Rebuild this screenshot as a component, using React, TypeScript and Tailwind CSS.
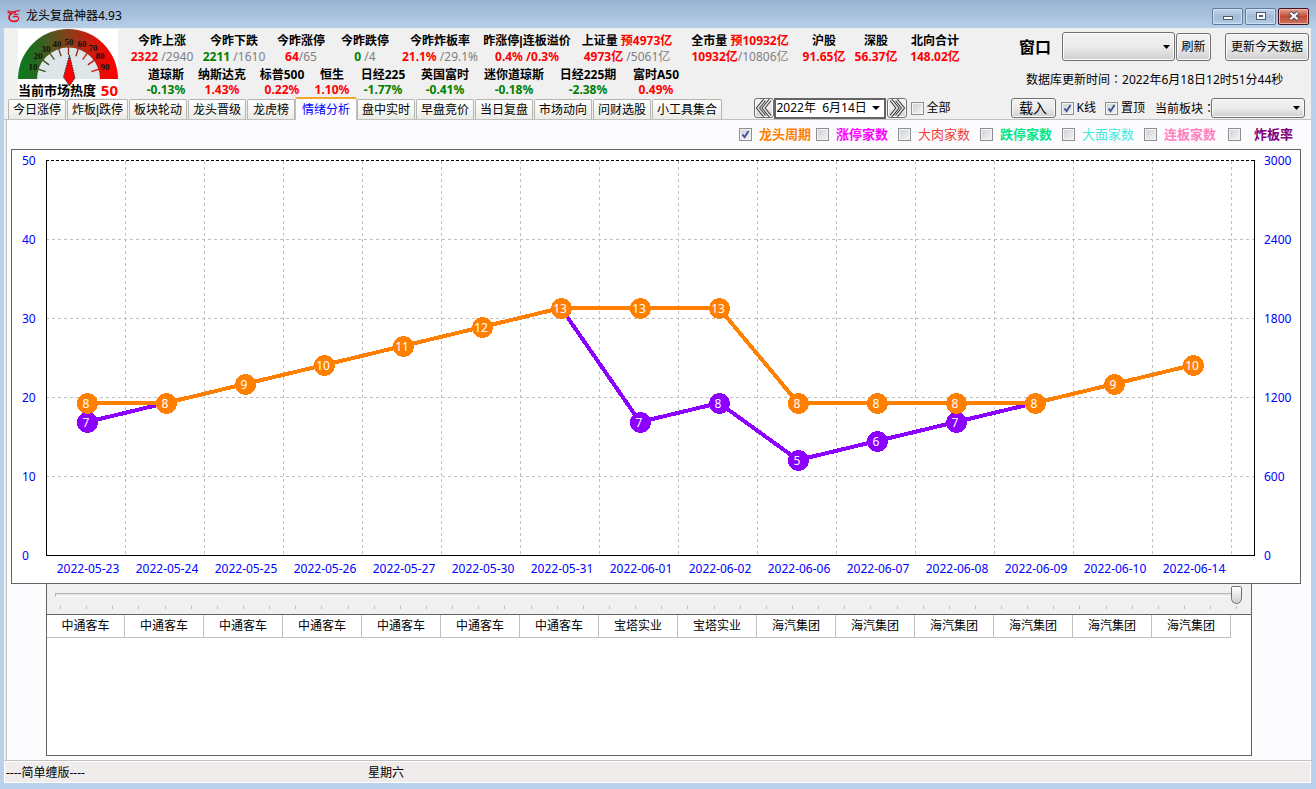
import React, { useState } from "react";

type Tone = "red" | "green" | "gray";
type Part = [string, Tone];

const toneClass: Record<Tone, string> = {
  red: "font-bold text-[#ff0000]",
  green: "font-bold text-[#008000]",
  gray: "font-normal text-[#808080]",
};

const market: { w: string; label: string; extra?: string; parts: Part[] }[] = [
  { w: "w-[72px]", label: "今昨上涨", parts: [["2322", "red"], [" /2940", "gray"]] },
  { w: "w-[72px]", label: "今昨下跌", parts: [["2211", "green"], [" /1610", "gray"]] },
  { w: "w-[62px]", label: "今昨涨停", parts: [["64", "red"], ["/65", "gray"]] },
  { w: "w-[66px]", label: "今昨跌停", parts: [["0", "green"], [" /4", "gray"]] },
  { w: "w-[84px]", label: "今昨炸板率", parts: [["21.1%", "red"], [" /29.1%", "gray"]] },
  { w: "w-[90px]", label: "昨涨停|连板溢价", parts: [["0.4% /0.3%", "red"]] },
  { w: "w-[110px]", label: "上证量", extra: "预4973亿", parts: [["4973亿", "red"], [" /5061亿", "gray"]] },
  { w: "w-[116px]", label: "全市量", extra: "预10932亿", parts: [["10932亿", "red"], ["/10806亿", "gray"]] },
  { w: "w-[52px]", label: "沪股", parts: [["91.65亿", "red"]] },
  { w: "w-[52px]", label: "深股", parts: [["56.37亿", "red"]] },
  { w: "w-[66px]", label: "北向合计", parts: [["148.02亿", "red"]] },
];

const indices: { w: string; label: string; value: string }[] = [
  { w: "w-[56px]", label: "道琼斯", value: "-0.13%" },
  { w: "w-[56px]", label: "纳斯达克", value: "1.43%" },
  { w: "w-[64px]", label: "标普500", value: "0.22%" },
  { w: "w-[36px]", label: "恒生", value: "1.10%" },
  { w: "w-[66px]", label: "日经225", value: "-1.77%" },
  { w: "w-[58px]", label: "英国富时", value: "-0.41%" },
  { w: "w-[80px]", label: "迷你道琼斯", value: "-0.18%" },
  { w: "w-[68px]", label: "日经225期", value: "-2.38%" },
  { w: "w-[68px]", label: "富时A50", value: "0.49%" },
];

const tabs: { label: string; w: string }[] = [
  { label: "今日涨停", w: "w-[58px]" },
  { label: "炸板|跌停", w: "w-[61px]" },
  { label: "板块轮动", w: "w-[58px]" },
  { label: "龙头晋级", w: "w-[58px]" },
  { label: "龙虎榜", w: "w-[48px]" },
  { label: "情绪分析", w: "w-[58px]" },
  { label: "盘中实时", w: "w-[58px]" },
  { label: "早盘竞价", w: "w-[58px]" },
  { label: "当日复盘", w: "w-[58px]" },
  { label: "市场动向", w: "w-[58px]" },
  { label: "问财选股", w: "w-[58px]" },
  { label: "小工具集合", w: "w-[70px]" },
];

const dates = ["2022-05-23", "2022-05-24", "2022-05-25", "2022-05-26", "2022-05-27", "2022-05-30", "2022-05-31", "2022-06-01", "2022-06-02", "2022-06-06", "2022-06-07", "2022-06-08", "2022-06-09", "2022-06-10", "2022-06-14"];
const leader = [8, 8, 9, 10, 11, 12, 13, 13, 13, 8, 8, 8, 8, 9, 10];
const follower = [7, 8, 9, 10, 11, 12, 13, 7, 8, 5, 6, 7, 8, 9, 10];
const stocks = ["中通客车", "中通客车", "中通客车", "中通客车", "中通客车", "中通客车", "中通客车", "宝塔实业", "宝塔实业", "海汽集团", "海汽集团", "海汽集团", "海汽集团", "海汽集团", "海汽集团"];

const seriesToggles = [
  { label: "龙头周期", color: "text-[#ff8000]", weight: "font-bold", space: "mr-[5px]", gap: "gap-[7px]", on: true },
  { label: "涨停家数", color: "text-[#ff00ff]", weight: "font-bold", space: "mr-[10px]", gap: "gap-[7px]", on: false },
  { label: "大肉家数", color: "text-[#f03c3c]", weight: "font-normal", space: "mr-[10px]", gap: "gap-[7px]", on: false },
  { label: "跌停家数", color: "text-[#00e68a]", weight: "font-bold", space: "mr-[10px]", gap: "gap-[7px]", on: false },
  { label: "大面家数", color: "text-[#40e8e0]", weight: "font-normal", space: "mr-[10px]", gap: "gap-[7px]", on: false },
  { label: "连板家数", color: "text-[#ff80c0]", weight: "font-bold", space: "mr-3", gap: "gap-[7px]", on: false },
  { label: "炸板率", color: "text-[#800080]", weight: "font-bold", space: "", gap: "gap-[13px]", on: false },
];

const buttonFace =
  "border border-[#707070] rounded-[3px] bg-linear-to-b from-[#f2f2f2] from-0% via-[#ebebeb] via-50% to-[#cfcfcf] shadow-[inset_0_0_0_1px_#fbfbfb]";

function Piped({ text }: { text: string }) {
  const [left, right] = text.split("|");
  if (right === undefined) return <>{text}</>;
  return (
    <>
      {left}
      <span className="font-['Liberation_Sans',sans-serif]">|</span>
      {right}
    </>
  );
}

function Check({ label, on, text = "", gap = "gap-[3px]" }: { label: string; on: boolean; text?: string; gap?: string }) {
  return (
    <label className={`flex items-center whitespace-nowrap ${gap}`}>
      <span className="grid size-[13px] shrink-0">
        <input
          type="checkbox"
          defaultChecked={on}
          className="peer col-start-1 row-start-1 size-[13px] appearance-none border border-[#8e8f8f] bg-linear-to-br from-[#cbcfd5] to-[#f6f6f6] shadow-[inset_0_0_0_1px_#f4f4f4]"
        />
        <svg viewBox="0 0 13 13" className="pointer-events-none invisible col-start-1 row-start-1 size-[13px] peer-checked:visible">
          <path d="M3.5 6.5 L5.6 9.2 L9.5 3" fill="none" stroke="#3b5495" strokeWidth="1.9" />
        </svg>
      </span>
      <span className={text}>{label}</span>
    </label>
  );
}

function DropDown({ label, size }: { label: string; size: string }) {
  return (
    <span className={`grid items-center ${size}`}>
      <select aria-label={label} className={`col-start-1 row-start-1 size-full appearance-none ${buttonFace}`} />
      <svg viewBox="0 0 8 4" className="pointer-events-none col-start-1 row-start-1 mr-1 h-1 w-2 justify-self-end">
        <path d="M0 0H7L3.5 4Z" fill="#000" />
      </svg>
    </span>
  );
}

function Chevrons({ d }: { d: string }) {
  return (
    <svg viewBox="0 0 18 18" className="size-[18px]" fill="none">
      <path d={d} stroke="#2a2a2a" strokeWidth="3.4" />
      <path d={d} stroke="#e4e4e4" strokeWidth="1.6" />
    </svg>
  );
}

function TitleBar() {
  const face =
    "flex h-[17px] w-[31px] items-center justify-center rounded-[2px] border border-[#5f7a9b] bg-linear-to-b from-[#c3d6ea] from-0% via-[#a3bcd8] via-50% to-[#b4cce6] shadow-[inset_0_0_0_1px_#d3e2f2]";
  return (
    <header className="flex h-7 items-center bg-linear-to-b from-[#98b3d1] to-[#b7cfe9] pt-1 pr-[7px] pl-[7px]">
      <svg viewBox="0 0 14 14" className="h-[14px] w-[14px]" fill="none" stroke="#dc1428">
        <path d="M0.5 1.5 L3.5 3 L8 2.4 L12.8 1.4 M0.5 3.4 L4 4.4 L9 3.6" strokeWidth="1.1" />
        <path d="M5 4.4 C2.2 5.4 1.4 8 2.6 10.4 C4 12.8 8.4 12.9 11 11.2" strokeWidth="1.7" />
        <path d="M11 11.2 C12.4 9.4 11.6 7.6 9.4 7.4 L5.8 7.6 M7 5.6 L11.5 5.2" strokeWidth="1.1" />
      </svg>
      <h1 className="ml-[5px] text-xs font-normal">龙头复盘神器4.93</h1>
      <div className="ml-auto flex gap-[2px]">
        <button aria-label="最小化" className={face}>
          <svg viewBox="0 0 12 10" className="h-[10px] w-3">
            <rect x="1.5" y="5.5" width="9" height="3" fill="#fff" stroke="#4b5a6e" />
          </svg>
        </button>
        <button aria-label="最大化" className={face}>
          <svg viewBox="0 0 12 10" className="h-[10px] w-3">
            <rect x="1.5" y="1.5" width="9" height="7" fill="#fff" stroke="#4b5a6e" />
            <rect x="4.5" y="4.5" width="3" height="1" fill="#a9c0da" stroke="#4b5a6e" />
          </svg>
        </button>
        <button
          aria-label="关闭"
          className="flex h-[17px] w-[31px] items-center justify-center rounded-[2px] border border-[#471321] bg-linear-to-b from-[#e3a497] from-0% via-[#c04a35] via-50% to-[#d0745c] shadow-[inset_0_0_0_1px_#eab5aa]"
        >
          <svg viewBox="0 0 12 10" className="h-[10px] w-3">
            <path d="M2 1.5 L10 8.5 M10 1.5 L2 8.5" stroke="#4b4a55" strokeWidth="4.2" />
            <path d="M2.4 1.8 L9.6 8.2 M9.6 1.8 L2.4 8.2" stroke="#fff" strokeWidth="2.2" />
          </svg>
        </button>
      </div>
    </header>
  );
}

function Gauge() {
  const marks: [string, number, number][] = [
    ["10", 15, 41], ["20", 20, 30], ["30", 28, 23], ["40", 39, 18], ["50", 51, 16], ["60", 64, 18], ["70", 75, 22], ["80", 82, 30], ["90", 87, 41],
  ];
  const shades = ["#3c5c18", "#4c5818", "#5c4c18", "#704418", "#883818", "#a03018", "#b82410", "#cc1810", "#e01008"];
  return (
    <div className="mt-px w-[100px] shrink-0 bg-white">
      <svg viewBox="0 0 100 53" className="block h-[53px] w-full overflow-visible">
        <defs>
          <linearGradient id="heat" x1="0" x2="1" y1="0" y2="0">
            <stop offset="0" stopColor="#087c1c" />
            <stop offset="0.2" stopColor="#2c6620" />
            <stop offset="0.5" stopColor="#85401c" />
            <stop offset="0.78" stopColor="#d81408" />
            <stop offset="1" stopColor="#ff0000" />
          </linearGradient>
        </defs>
        <path d="M0 50 A50 50 0 0 1 100 50 Z" fill="url(#heat)" />
        <path d="M19 50 A31.5 31.5 0 0 1 82 50 Z" fill="#dfe6ea" />
        {marks.map(([t], i) => {
          const a = Math.PI * (1 - (i + 1) / 10);
          const c = Math.cos(a);
          const s = Math.sin(a);
          return <line key={t} x1={50.5 + c * 32} y1={50 - s * 32} x2={50.5 + c * 24} y2={50 - s * 24} stroke={shades[i]} strokeWidth="1.4" />;
        })}
        {marks.map(([t, x, y]) => (
          <text key={t} x={x} y={y} textAnchor="middle" fill="#111" className="font-['Liberation_Serif',serif] text-[9px] font-bold">
            {t}
          </text>
        ))}
        <path d="M51.5 26 L57 49 L51.5 57 L45.5 48 Z" fill="#ff0000" stroke="#203038" strokeWidth="1" strokeDasharray="1.5 1" />
      </svg>
      <p className="flex h-4 items-center justify-between text-[13px] leading-4 font-bold whitespace-nowrap">
        <span>当前市场热度</span>
        <span className="text-[15px] text-[#ff0000]">50</span>
      </p>
    </div>
  );
}

function Stats() {
  return (
    <div className="pt-[5px] text-center text-xs leading-4 whitespace-pre">
      <dl className="flex pl-2">
        {market.map((m) => (
          <div key={m.label} className={`flex shrink-0 flex-col items-center ${m.w}`}>
            <dt className="font-bold">
              <Piped text={m.label} />
              {m.extra && <span className="text-[#ff0000]"> {m.extra}</span>}
            </dt>
            <dd>
              {m.parts.map(([t, tone]) => (
                <span key={t} className={toneClass[tone]}>{t}</span>
              ))}
            </dd>
          </div>
        ))}
      </dl>
      <dl className="mt-[2px] flex pl-5 leading-[15px]">
        {indices.map((m) => (
          <div key={m.label} className={`flex shrink-0 flex-col items-center ${m.w}`}>
            <dt className="font-bold">{m.label}</dt>
            <dd className={m.value.startsWith("-") ? toneClass.green : toneClass.red}>{m.value}</dd>
          </div>
        ))}
      </dl>
    </div>
  );
}

function Tools() {
  return (
    <div className="ml-auto flex flex-col pt-1 pr-[2px]">
      <div className="flex items-center whitespace-nowrap">
        <span className="mr-[11px] text-base leading-6 font-bold">窗口</span>
        <DropDown label="窗口" size="h-[29px] w-[113px]" />
        <button className={`ml-px h-7 w-[35px] ${buttonFace}`}>刷新</button>
        <button className={`ml-[14px] h-7 w-[84px] ${buttonFace}`}>更新今天数据</button>
      </div>
      <p className="mt-2 pl-[7px] leading-5 whitespace-nowrap">
        数据库更新时间<span className="font-['Noto_Sans_CJK_TC',sans-serif]">：</span>2022年6月18日12时51分44秒
      </p>
    </div>
  );
}

function TabBar({ active, onPick }: { active: string; onPick: (t: string) => void }) {
  return (
    <div className="flex h-[22px] items-end border-b border-[#c0c0c0] pl-1">
      <div role="tablist" className="flex items-end gap-px">
        {tabs.map(({ label, w }) => (
          <button
            key={label}
            role="tab"
            aria-selected={label === active}
            onClick={() => onPick(label)}
            className={
              label === active
                ? "-mx-px -mb-px h-[23px] w-[62px] rounded-t-[2px] border border-t-2 border-b-0 border-[#c0c0c0] border-t-[#f0a830] bg-[#fcfcfe] whitespace-nowrap text-[#0000ff]"
                : `h-5 rounded-t-[2px] border border-b-0 border-[#b4b4b0] bg-linear-to-b from-[#fefefe] to-[#ececE6] whitespace-nowrap ${w}`
            }
          >
            <Piped text={label} />
          </button>
        ))}
      </div>
      <div className="ml-auto flex h-[22px] items-center">
        <button aria-label="前一天" className={`flex size-5 items-center justify-center ${buttonFace}`}>
          <Chevrons d="M9.5 1 L3 9 L9.5 17 M15 1 L8.5 9 L15 17" />
        </button>
        <div className="flex h-[21px] w-[112px] items-center border-2 border-[#646464] bg-white">
          <input aria-label="日期" defaultValue="2022年  6月14日" className="h-4 w-24 pl-px text-xs outline-none" />
          <button aria-label="选择日期">
            <svg viewBox="0 0 8 4" className="h-1 w-2"><path d="M0 0H8L4 4Z" fill="#000" /></svg>
          </button>
        </div>
        <button aria-label="后一天" className={`ml-px flex size-5 items-center justify-center ${buttonFace}`}>
          <Chevrons d="M3 1 L9.5 9 L3 17 M8.5 1 L15 9 L8.5 17" />
        </button>
        <span className="ml-1"><Check label="全部" on={false} /></span>
      </div>
      <div className="ml-[60px] flex h-[22px] items-center pr-[6px] whitespace-nowrap">
        <button className={`h-5 w-[45px] text-sm leading-4 ${buttonFace}`}>载入</button>
        <span className="ml-[5px] flex gap-[9px]">
          <Check label="K线" on />
          <Check label="置顶" on />
        </span>
        <span className="ml-[10px]">
          当前板块<span className="font-['Noto_Sans_CJK_TC',sans-serif]">：</span>
        </span>
        <span className="-ml-1"><DropDown label="当前板块" size="h-5 w-[94px]" /></span>
      </div>
    </div>
  );
}

const px = (i: number) => 75 + 79 * i;
const py = (v: number) => 405 - 19 * v;

function Series({ values, color }: { values: number[]; color: string }) {
  return (
    <g>
      <polyline
        points={values.map((v, i) => `${px(i)},${py(v)}`).join(" ")}
        fill="none"
        stroke={color}
        strokeWidth="4"
        shapeRendering="crispEdges"
      />
      {values.map((v, i) => (
        <g key={i}>
          <circle cx={px(i) + 0.5} cy={py(v) + 0.5} r="10.5" fill={color} shapeRendering="crispEdges" />
          <text x={px(i) - 1} y={py(v) + 5} textAnchor="middle" fill="#fff">{v}</text>
        </g>
      ))}
    </g>
  );
}

function Chart() {
  return (
    <div className="border border-[#646464] bg-white">
      <svg viewBox="0 0 1288 433" className="block h-auto w-full text-xs" role="img" aria-label="情绪分析">
        <g stroke="#c0c0c0" strokeDasharray="3 3" shapeRendering="crispEdges">
          {[1, 2, 3, 4].map((r) => (
            <line key={r} x1="34" x2="1242" y1={10.5 + 79 * r} y2={10.5 + 79 * r} />
          ))}
          {dates.map((d, i) => (
            <line key={d} x1={113.5 + 79 * i} x2={113.5 + 79 * i} y1="11" y2="405" />
          ))}
        </g>
        <line x1="34" x2="1242" y1="10.5" y2="10.5" stroke="#000" strokeDasharray="3 2" shapeRendering="crispEdges" />
        <path d="M34.5 10 V405.5 H1242.5 V10" fill="none" stroke="#000" shapeRendering="crispEdges" />
        <g fill="#0000ff">
          {[50, 40, 30, 20, 10, 0].map((v, i) => (
            <text key={v} x="10" y={15 + 79 * i}>{v}</text>
          ))}
          {[3000, 2400, 1800, 1200, 600, 0].map((v, i) => (
            <text key={v} x="1252" y={15 + 79 * i}>{v}</text>
          ))}
          {dates.map((d, i) => (
            <text key={d} x={76 + 79 * i} y="423" textAnchor="middle">{d}</text>
          ))}
        </g>
        <Series values={follower} color="#8c00ff" />
        <Series values={leader} color="#ff8000" />
      </svg>
    </div>
  );
}

function History() {
  return (
    <section className="mr-[49px] ml-[35px] flex flex-1 flex-col border border-t-0 border-[#646464] bg-white">
      <div className="flex h-[31px] flex-col border-b border-[#646464] bg-[#f0f0f0] px-2 pt-[2px]">
        <input
          type="range"
          aria-label="日期范围"
          min={0}
          max={45}
          defaultValue={45}
          className="h-[18px] w-full appearance-none bg-transparent [&::-webkit-slider-runnable-track]:h-1 [&::-webkit-slider-runnable-track]:border [&::-webkit-slider-runnable-track]:border-t-[#b0b0b0] [&::-webkit-slider-runnable-track]:border-l-[#b0b0b0] [&::-webkit-slider-runnable-track]:border-r-white [&::-webkit-slider-runnable-track]:border-b-white [&::-webkit-slider-runnable-track]:bg-[#e7eaea] [&::-webkit-slider-thumb]:-mt-2 [&::-webkit-slider-thumb]:h-[18px] [&::-webkit-slider-thumb]:w-[11px] [&::-webkit-slider-thumb]:appearance-none [&::-webkit-slider-thumb]:rounded-t-[2px] [&::-webkit-slider-thumb]:rounded-b-[6px] [&::-webkit-slider-thumb]:border [&::-webkit-slider-thumb]:border-[#6e6e6e] [&::-webkit-slider-thumb]:bg-linear-to-b [&::-webkit-slider-thumb]:from-white [&::-webkit-slider-thumb]:to-[#d0d0d0]"
        />
        <div className="mt-[2px] flex justify-between px-[5px]" aria-hidden="true">
          {Array.from({ length: 46 }, (_, i) => (
            <span key={i} className="h-[3px] w-px bg-[#c0c0c0]" />
          ))}
        </div>
      </div>
      <table className="table-fixed border-separate border-spacing-0 self-start">
        <tbody>
          <tr>
            {stocks.map((s, i) => (
              <td key={i} className="h-[23px] w-[79px] border-r border-b border-[#c0c0c0] p-0 text-center first:w-[78px]">{s}</td>
            ))}
          </tr>
        </tbody>
      </table>
    </section>
  );
}

export default function App() {
  const [active, setActive] = useState("情绪分析");
  return (
    <div className="flex min-h-screen flex-col bg-[#b9d1ea] font-['Noto_Sans','Noto_Sans_CJK_SC',sans-serif] text-xs text-black">
      <TitleBar />
      <main className="mr-[5px] mb-[6px] ml-1 flex flex-1 flex-col bg-[#f0f0f0]">
        <div className="flex h-[70px] items-start pl-[14px]">
          <Gauge />
          <Stats />
          <Tools />
        </div>
        <TabBar active={active} onPick={setActive} />
        <div className="ml-[2px] flex flex-1 flex-col border-l border-[#c0c0c0] bg-[#fcfcfe] pr-[10px] pb-1 pl-1">
          <div className="flex h-[29px] items-center justify-end pr-2 text-[13px]">
            {seriesToggles.map((s) => (
              <span key={s.label} className={s.space}>
                <Check label={s.label} on={s.on} text={`${s.color} ${s.weight}`} gap={s.gap} />
              </span>
            ))}
          </div>
          <Chart />
          <History />
        </div>
        <footer className="flex h-[23px] items-center border-t border-[#c0c0c0] bg-[#f0eceb] pt-[2px] pl-[2px] shadow-[inset_0_0_0_1px_#ffffff]">
          <span className="w-[362px]">----简单缠版----</span>
          <span>星期六</span>
        </footer>
      </main>
    </div>
  );
}
